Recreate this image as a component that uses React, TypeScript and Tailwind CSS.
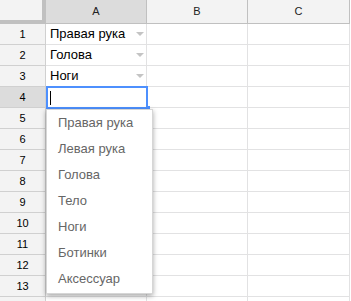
import React from 'react'

const ROWS = 14
const VALUES: Record<number, string> = { 1: 'Правая рука', 2: 'Голова', 3: 'Ноги' }
const OPTIONS = ['Правая рука', 'Левая рука', 'Голова', 'Тело', 'Ноги', 'Ботинки', 'Аксессуар']

function Arrow() {
  return <div className="w-0 h-0 border-l-[4px] border-r-[4px] border-t-[4px] border-l-transparent border-r-transparent border-t-[#c4c4c4]" />
}

export default function App() {
  return (
    <div className="relative w-[351px] h-[301px] overflow-hidden bg-white font-['Liberation_Sans',Arial,sans-serif] text-black">
      {/* header row */}
      <div className="flex h-[24px]">
        <div className="w-[46px] h-[24px] bg-[#f3f3f3] border-r-4 border-b-4 border-[#c0c0c0]" />
        <div className="w-[101px] h-[24px] bg-[#dcdcdc] border-r border-b border-[#c0c0c0] flex items-center justify-center text-[11px] text-[#222]">A</div>
        <div className="w-[101px] h-[24px] bg-[#f3f3f3] border-r border-b border-[#c0c0c0] flex items-center justify-center text-[11px] text-[#222]">B</div>
        <div className="w-[102px] h-[24px] bg-[#f3f3f3] border-r border-b border-[#c0c0c0] flex items-center justify-center text-[11px] text-[#222]">C</div>
      </div>

      {Array.from({ length: ROWS }, (_, i) => i + 1).map((r) => (
        <div key={r} className="flex h-[21px]">
          <div className={`w-[46px] h-[21px] border-r border-b border-[#d0d0d0] flex items-center justify-center text-[11px] ${r === 4 ? 'bg-[#dcdcdc]' : 'bg-[#f3f3f3]'}`}>
            {r < ROWS ? r : ''}
          </div>
          <div className="w-[101px] h-[21px] border-r border-b border-[#e2e2e3] flex items-center pl-[4px] pr-[2px] text-[13px]">
            {VALUES[r] && (
              <>
                <span className="flex-1 truncate">{VALUES[r]}</span>
                <Arrow />
              </>
            )}
          </div>
          <div className="w-[101px] h-[21px] border-r border-b border-[#e2e2e3]" />
          <div className="w-[102px] h-[21px] border-r border-b border-[#e2e2e3]" />
        </div>
      ))}

      {/* active cell A4 */}
      <div className="absolute left-[46px] top-[86px] w-[102px] h-[23px] border-2 border-[#4d90fe] bg-white">
        <div className="ml-[2px] mt-[3px] w-[1px] h-[14px] bg-black" />
      </div>
      <div className="absolute left-[146px] top-[106px] w-[4px] h-[4px] bg-[#4d90fe]" />

      {/* validation dropdown */}
      <div className="absolute left-[46px] top-[109px] w-[107px] pb-[1px] bg-white border border-[#d6d6d6] shadow-[0_2px_5px_rgba(0,0,0,0.35)]">
        {OPTIONS.map((o) => (
          <div key={o} className="h-[26px] flex items-center pl-[11px] text-[13px] text-[#666]">
            {o}
          </div>
        ))}
      </div>
    </div>
  )
}
